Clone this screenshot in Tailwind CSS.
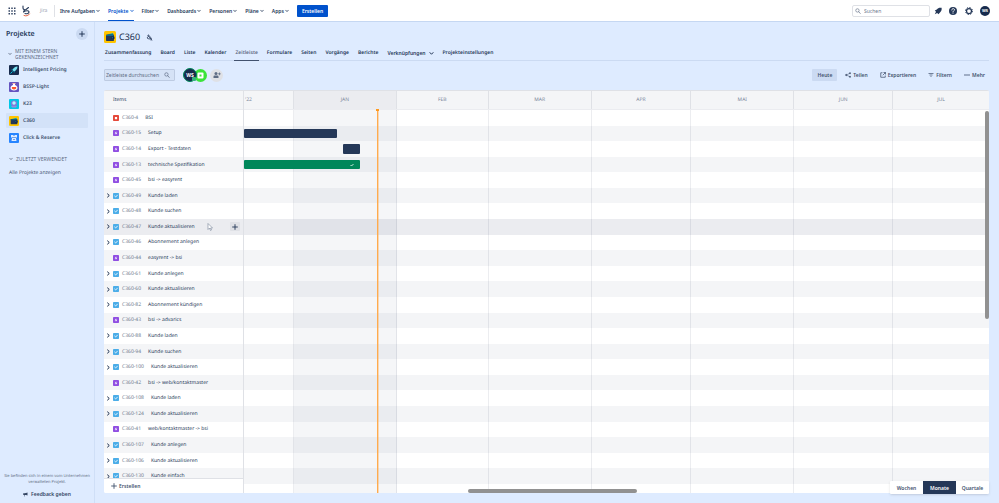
<!DOCTYPE html>
<html lang="de">
<head>
  <meta charset="UTF-8">
  <meta name="viewport" content="width=device-width, initial-scale=1.0">
  <title>C360 - Zeitleiste - Jira</title>
  <script src="https://cdn.jsdelivr.net/npm/@tailwindcss/browser@4"></script>
</head>
<body class="flex h-screen flex-col overflow-hidden bg-[#deebff] font-['Noto_Sans','Open_Sans',sans-serif] text-[5px] leading-[8px] text-[#253858] [text-rendering:geometricPrecision]">

  <!-- Icons -->
  <svg class="hidden">
    <symbol id="chevron" viewBox="0 0 8 8"><path d="M1.500 2.500 4 5.200 6.500 2.500" fill="none" stroke="currentColor" stroke-width="1.600" stroke-linecap="round" stroke-linejoin="round"/></symbol>
    <symbol id="plus" viewBox="0 0 8 8"><path d="M4 .8v6.400M.8 4h6.400" fill="none" stroke="currentColor" stroke-width="1.200" stroke-linecap="round"/></symbol>
    <symbol id="search" viewBox="0 0 16 16"><circle cx="6.500" cy="6.500" r="4.500" fill="none" stroke="currentColor" stroke-width="1.800"/><path d="m10 10 4 4.500" fill="none" stroke="currentColor" stroke-width="2" stroke-linecap="round"/></symbol>
    <symbol id="story" viewBox="0 0 16 16"><rect width="16" height="16" rx="2" fill="#904ee2"/><path d="M8.500 3.500 4.500 9h3v3.500L11.500 7h-3z" fill="#fff"/></symbol>
    <symbol id="bug" viewBox="0 0 16 16"><rect width="16" height="16" rx="2" fill="#e5493a"/><rect x="5" y="5" width="6" height="6" rx="1" fill="#fff"/></symbol>
    <symbol id="task" viewBox="0 0 16 16"><rect width="16" height="16" rx="2" fill="#4bade8"/><path d="m4.500 8.200 2.500 2.500 4.800-5" fill="none" stroke="#fff" stroke-width="2.200" stroke-linecap="round"/></symbol>
    <symbol id="wallet" viewBox="0 0 24 24"><rect width="24" height="24" rx="3" fill="#ffc400"/><path d="m7 7 11-3 1 5H7z" fill="#00a3bf"/><rect x="4" y="7" width="16" height="13" rx="1.500" fill="#253858"/><path d="M4 8h15v2H4z" fill="#0d6c8a"/><rect x="14" y="11" width="7" height="5" rx="1" fill="#172b4d"/><circle cx="16.500" cy="13.500" r="1" fill="#00c7e6"/></symbol>
  </svg>

  <!-- Top navigation -->
  <header class="flex h-[22px] shrink-0 items-center border-b border-[#c5d7f2] bg-white pr-[9px] pl-2 font-semibold">
    <button class="w-2" aria-label="Wechseln zu">
      <svg class="size-2" viewBox="0 0 16 16" fill="#344563"><path d="M1 1h3v3H1zM6.500 1h3v3h-3zM12 1h3v3h-3zM1 6.500h3v3H1zM6.500 6.500h3v3h-3zM12 6.500h3v3h-3zM1 12h3v3H1zM6.500 12h3v3h-3zM12 12h3v3h-3z"/></svg>
    </button>
    <a href="#" class="ml-[5px] flex w-[34px] items-center font-normal text-[#97a0af]">
      <svg class="mr-[9px] h-3 w-2.5 shrink-0" viewBox="0 0 20 24" fill="none" stroke-width="2.200" stroke-linecap="round" stroke-linejoin="round"><path d="M4 2v4c0 3 3 4 6 3l5-4M10 9c-3 1-5 2-5 5 4-3 11-4 11 0 0 3-4 4-8 3" stroke="#253858"/><path d="M6 21c5 2 9 0 11-3" stroke="#de350b" stroke-width="1.500"/></svg>
      Jira
    </a>
    <span class="-ml-[1px] h-3 w-px bg-[#dfe1e6]"></span>
    <nav class="ml-[5px] flex h-full items-center gap-2">
      <button class="flex items-center gap-[1px]">Ihre Aufgaben<svg class="size-1"><use href="#chevron"/></svg></button>
      <button class="flex h-full items-center gap-[1px] border-b-[1px] border-[#0052cc] pt-[1px] text-[#0052cc]">Projekte<svg class="size-1"><use href="#chevron"/></svg></button>
      <button class="flex items-center gap-[1px]">Filter<svg class="size-1"><use href="#chevron"/></svg></button>
      <button class="flex items-center gap-[1px]">Dashboards<svg class="size-1"><use href="#chevron"/></svg></button>
      <button class="flex items-center gap-[1px]">Personen<svg class="size-1"><use href="#chevron"/></svg></button>
      <button class="flex items-center gap-[1px]">Pläne<svg class="size-1"><use href="#chevron"/></svg></button>
      <button class="flex items-center gap-[1px]">Apps<svg class="size-1"><use href="#chevron"/></svg></button>
      <button class="h-3 rounded-[1px] bg-[#0052cc] px-[5px] text-white">Erstellen</button>
    </nav>
    <label class="ml-auto flex h-3 w-[78px] items-center gap-[3px] rounded-[2px] border border-[#dfe1e6] px-[2px] text-[#6b778c]">
      <svg class="size-[6px] shrink-0"><use href="#search"/></svg>
      <input type="search" placeholder="Suchen" aria-label="Suchen" class="w-full min-w-0 font-normal outline-none placeholder:text-[#6b778c]">
    </label>
    <div class="ml-1 flex items-center gap-[6px]">
      <button aria-label="Benachrichtigungen"><svg class="block size-[8px]" viewBox="0 0 20 20" fill="#253858"><path d="M19 2c-5-1-9 0-12 4L2 9l3 3-3 6 6-3 3 3 4-4c3-3 5-7 4-12z"/></svg></button>
      <button aria-label="Hilfe"><svg class="block size-[10px]" viewBox="0 0 20 20"><circle cx="10" cy="10" r="8" fill="#253858"/><path d="M7.500 8c0-4 5.500-3.500 5.500-.5 0 2-3 2-3 4M10 14v.5" fill="none" stroke="#fff" stroke-width="1.800" stroke-linecap="round"/></svg></button>
      <button aria-label="Einstellungen"><svg class="block size-[10px]" viewBox="0 0 20 20" fill="none" stroke="#253858"><circle cx="10" cy="10" r="5" stroke-width="2.500"/><circle cx="10" cy="10" r="7" stroke-width="2" stroke-dasharray="2.750"/></svg></button>
      <button class="size-[10px] rounded-full bg-[#172b4d] text-[4px] font-bold text-white">WS</button>
    </div>
  </header>

  <div class="flex min-h-0 flex-1">
    <!-- Sidebar -->
    <aside class="flex w-[95px] shrink-0 flex-col border-r border-[#cfdff7] px-[6px] pt-[6px] pb-[5px]">
      <div class="flex items-center justify-between">
        <h2 class="pt-[2px] text-[7px] font-semibold text-[#253858]">Projekte</h2>
        <button class="grid size-3 place-items-center rounded-full bg-[#cbdaf2]" aria-label="Projekt erstellen"><svg class="size-[6px] text-[#172b4d]"><use href="#plus"/></svg></button>
      </div>
      <button class="mt-2 flex items-center gap-[3px] pl-[2px] text-left leading-[6px] text-[#5e6c84]">
        <svg class="size-1 shrink-0"><use href="#chevron"/></svg>
        <span>MIT EINEM STERN<br>GEKENNZEICHNET</span>
      </button>
      <ul class="mt-[2px] font-semibold text-[#42526e]">
        <li><a href="#" class="mb-[2px] flex h-[15px] items-center gap-1 rounded-[1px] px-[3px]">
          <svg class="size-[10px]" viewBox="0 0 20 20"><rect width="20" height="20" rx="2" fill="#172b4d"/><path d="M17 3c-5 0-8 3-10 7l3 3c4-2 7-5 7-10z" fill="#79e2f2"/><path d="m8 8-4 2 3 1zM12 12l-2 4-1-3z" fill="#00a3bf"/><path d="m3 17 4-4" stroke="#00c7e6" stroke-width="2"/></svg>
          Intelligent Pricing</a></li>
        <li><a href="#" class="mb-[2px] flex h-[15px] items-center gap-1 rounded-[1px] px-[3px]">
          <svg class="size-[10px]" viewBox="0 0 20 20"><rect width="20" height="20" rx="2" fill="#6554c0"/><path d="M8 3h4v3c3 1 5 3 5 6 0 3-3 5-7 5s-7-2-7-5c0-3 2-5 5-6z" fill="#fff"/><path d="M6 10h8c2 3-1 5-4 5s-6-2-4-5z" fill="#ff5630"/><path d="M7 2h6v2H7z" fill="#ffbdad"/></svg>
          BSSP-Light</a></li>
        <li><a href="#" class="mb-[2px] flex h-[15px] items-center gap-1 rounded-[1px] px-[3px]">
          <svg class="size-[10px]" viewBox="0 0 20 20"><rect width="20" height="20" rx="2" fill="#00c7e6"/><circle cx="10" cy="9" r="6" fill="#8777d9"/><circle cx="10" cy="8" r="3.500" fill="#b3f5ff"/><path d="M4 14h12l-2 3H6z" fill="#998dd9"/></svg>
          K23</a></li>
        <li><a href="#" class="mb-[2px] flex h-[15px] items-center gap-1 rounded-[1px] bg-[#d3e2f8] px-[3px]">
          <svg class="size-[10px]"><use href="#wallet"/></svg>
          C360</a></li>
        <li><a href="#" class="mb-[2px] flex h-[15px] items-center gap-1 rounded-[1px] px-[3px]">
          <svg class="size-[10px]" viewBox="0 0 20 20"><rect width="20" height="20" rx="2" fill="#2684ff"/><path d="M4 4h4l2 2 2-2h4v4l-2 2 1 6H5l1-6-2-2z" fill="#deebff"/><path d="M7 8h2v2H7zM11 8h2v2h-2zM8 13h4v1H8z" fill="#0052cc"/></svg>
          Click &amp; Reserve</a></li>
      </ul>
      <button class="mt-[8px] flex items-center gap-[3px] pl-[3px] text-left text-[#5e6c84]"><svg class="size-1"><use href="#chevron"/></svg>ZULETZT VERWENDET</button>
      <a href="#" class="mt-[6px] pl-[3px] text-[#42526e]">Alle Projekte anzeigen</a>
      <div class="-mx-[4px] mt-auto text-center text-[4px] leading-[6px] text-[#5e6c84]">
        Sie befinden sich in einem vom Unternehmen verwalteten Projekt.
        <button class="mx-auto mt-1 flex items-center gap-[3px] text-[5px] font-semibold leading-[8px] text-[#344563]"><svg class="size-[5px]" viewBox="0 0 10 10" fill="currentColor"><path d="M0 3 6 2l3-1v6L6 6H3v3H2V6L0 5z"/></svg>Feedback geben</button>
      </div>
    </aside>

    <!-- Project -->
    <main class="flex min-w-0 flex-1 flex-col pr-[10px] pb-[10px] pl-[9px]">
      <div class="mt-[9px] flex h-3 items-center gap-[3px]">
        <svg class="size-3"><use href="#wallet"/></svg>
        <h1 class="text-[9px] text-[#172b4d]">C360</h1>
        <button class="ml-[3px]" aria-label="Automatisierung"><svg class="block size-[7px]" viewBox="0 0 14 14" fill="none" stroke="#253858" stroke-width="1.500"><path d="M5 1v2M2 8l4-5 5 6-5 1zM3 2l9 11M9 12l3-1"/></svg></button>
      </div>
      <nav class="mt-[6px] flex h-[12px] gap-[9px] border-b border-[#cbdaf2] px-[1px] font-semibold">
        <a href="#">Zusammenfassung</a>
        <a href="#">Board</a>
        <a href="#">Liste</a>
        <a href="#">Kalender</a>
        <a href="#" class="-mx-[1px] h-[12px] border-b border-[#42526e] px-[1px] text-[#5e6c84]">Zeitleiste</a>
        <a href="#">Formulare</a>
        <a href="#">Seiten</a>
        <a href="#">Vorgänge</a>
        <a href="#">Berichte</a>
        <button class="flex h-2 items-center gap-[3px]">Verknüpfungen<svg class="size-[5px]"><use href="#chevron"/></svg></button>
        <a href="#">Projekteinstellungen</a>
      </nav>

      <div class="mt-2 flex h-3 items-center">
        <label class="flex h-3 w-[71px] items-center rounded-[1px] border border-[#bdcbe2] bg-[#d5e2f6] px-[1px] text-[#5e6c84]">
          <input type="text" placeholder="Zeitleiste durchsuchen" aria-label="Zeitleiste durchsuchen" class="w-full min-w-0 outline-none placeholder:text-[#5e6c84]">
          <svg class="mr-[3px] size-[6px] shrink-0"><use href="#search"/></svg>
        </label>
        <button class="relative z-10 ml-2 grid size-[14px] place-items-center rounded-full border border-[#00875a] bg-[#172b4d] font-bold text-white">WS<span class="absolute right-0 bottom-0 size-1 rounded-[1px] bg-[#36b37e]"></span></button>
        <button class="-ml-[3px] grid size-[13px] place-items-center rounded-full bg-[#3be33b]" aria-label="Bearbeiter"><svg class="size-[7px]" viewBox="0 0 14 14"><rect x="1" y="1" width="12" height="12" rx="2" fill="#fff"/><rect x="5" y="5" width="4" height="4" fill="#3be33b"/></svg></button>
        <button class="ml-[3px] grid size-[13px] place-items-center rounded-full bg-[#dfe1e6]" aria-label="Personen hinzufügen"><svg class="size-2" viewBox="0 0 16 16" fill="#5e6c84"><circle cx="6" cy="5" r="3"/><path d="M1 14V11q0-2 2-2h6q2 0 2 2v3zM12 3h1.500v2h2v1.500h-2v2H12v-2h-2V5h2z"/></svg></button>

        <div class="ml-auto flex items-center gap-3 pr-1 font-semibold text-[#42526e]">
          <button class="-mr-1 h-3 rounded-[1px] bg-[#cbdaf2] px-[5px]">Heute</button>
          <button class="flex items-center gap-[2px]"><svg class="size-[6px]" viewBox="0 0 12 12" fill="currentColor" stroke="currentColor"><path d="M10 2.500 2.500 6l7.500 3.500" fill="none"/><circle cx="2.500" cy="6" r="1.500"/><circle cx="10" cy="2.500" r="1.300"/><circle cx="10" cy="9.500" r="1.300"/></svg>Teilen</button>
          <button class="flex items-center gap-[2px]"><svg class="size-[6px]" viewBox="0 0 12 12" fill="none" stroke="currentColor" stroke-width="1.500"><path d="M5 1.500H1.500v9h9V7M7 1h4v4M11 1 5.500 6.500"/></svg>Exportieren</button>
          <button class="flex items-center gap-[2px]"><svg class="size-[6px]" viewBox="0 0 12 12" fill="none" stroke="currentColor" stroke-width="1.400"><path d="M1 3h10M3 6h6M5 9h2"/></svg>Filtern</button>
          <button class="flex items-center gap-[2px]"><svg class="size-[6px]" viewBox="0 0 12 12" fill="currentColor"><circle cx="2" cy="6" r="1.500"/><circle cx="6" cy="6" r="1.500"/><circle cx="10" cy="6" r="1.500"/></svg>Mehr</button>
        </div>
      </div>

      <!-- Timeline -->
      <section class="relative mt-[9px] flex min-h-0 flex-1 overflow-hidden rounded-[2px] border-t border-[#dfe1e6] bg-white">
        <div class="relative z-10 w-[140px] shrink-0 border-r border-[#dfe1e6]">
          <div class="flex h-[19px] items-center border-b border-[#ebecf0] bg-[#f4f5f7] pl-[9px]">Items</div>
          <ul id="items" class="grid h-[374px] auto-rows-fr"></ul>
          <button class="absolute inset-x-0 bottom-0 flex h-[15px] items-center gap-[2px] border-t border-[#dfe1e6] bg-white pl-[7px] font-semibold text-[#42526e]"><svg class="size-[6px]"><use href="#plus"/></svg>Erstellen</button>
        </div>
        <div class="relative min-w-0 flex-1">
          <div id="months" class="grid h-[19px] grid-cols-[50fr_103fr_92fr_103fr_100fr_103fr_99fr_96fr] border-b border-[#ebecf0] bg-[#f4f5f7] text-[#7a869a]"></div>
          <div id="rows" class="grid h-[374px] auto-rows-fr"></div>
          <div id="columns" class="absolute inset-x-0 top-[19px] bottom-0 grid grid-cols-[50fr_103fr_92fr_103fr_100fr_103fr_99fr_96fr]"></div>
          <div id="today" class="absolute top-[18px] bottom-0 w-[2px] border-l border-[#ffab4d] bg-[#ffab4d]/40"><span class="absolute top-0 -left-[2px] h-[2px] w-[3px] bg-[#ff991f]"></span></div>
        </div>
        <div class="absolute top-[20px] right-0 h-[208px] w-1 rounded-full bg-[#919191]"></div>
        <div id="scroll-x" class="absolute bottom-0 h-1 rounded-full bg-[#919191]"></div>
      </section>
    </main>
  </div>

  <!-- Zoom level -->
  <div class="absolute right-[10px] bottom-[9px] z-20 flex h-[13px] items-stretch rounded-[1px] bg-white font-semibold text-[#42526e] shadow">
    <button class="w-[33px]">Wochen</button>
    <button class="w-[33px] bg-[#253858] text-white">Monate</button>
    <button class="w-[33px]">Quartale</button>
  </div>

  <svg class="pointer-events-none absolute top-[223px] left-[207px] z-30 h-2 w-[6px]" viewBox="0 0 12 16"><path d="M2 1v12l3-3 2 5 2-1-2-4h4z" fill="#fff" stroke="#5e6c84"/></svg>

  <script>
    const items = [
      { key: 'C360-4', name: 'BSI', type: 'bug' },
      { key: 'C360-15', name: 'Setup', type: 'story', bar: [0, 93] },
      { key: 'C360-14', name: 'Export - Testdaten', type: 'story', bar: [99, 116] },
      { key: 'C360-13', name: 'technische Spezifikation', type: 'story', bar: [0, 116], done: true },
      { key: 'C360-45', name: 'bsi -> easyrent', type: 'story' },
      { key: 'C360-49', name: 'Kunde laden', type: 'task' },
      { key: 'C360-48', name: 'Kunde suchen', type: 'task' },
      { key: 'C360-47', name: 'Kunde aktualisieren', type: 'task', hover: true },
      { key: 'C360-46', name: 'Abonnement anlegen', type: 'task' },
      { key: 'C360-44', name: 'easyrent -> bsi', type: 'story' },
      { key: 'C360-61', name: 'Kunde anlegen', type: 'task' },
      { key: 'C360-60', name: 'Kunde aktualisieren', type: 'task' },
      { key: 'C360-82', name: 'Abonnement kündigen', type: 'task' },
      { key: 'C360-43', name: 'bsi -> advarics', type: 'story' },
      { key: 'C360-88', name: 'Kunde laden', type: 'task' },
      { key: 'C360-94', name: 'Kunde suchen', type: 'task' },
      { key: 'C360-100', name: 'Kunde aktualisieren', type: 'task' },
      { key: 'C360-42', name: 'bsi -> web/kontaktmaster', type: 'story' },
      { key: 'C360-108', name: 'Kunde laden', type: 'task' },
      { key: 'C360-124', name: 'Kunde aktualisieren', type: 'task' },
      { key: 'C360-41', name: 'web/kontaktmaster -> bsi', type: 'story' },
      { key: 'C360-107', name: 'Kunde anlegen', type: 'task' },
      { key: 'C360-106', name: 'Kunde aktualisieren', type: 'task' },
      { key: 'C360-130', name: 'Kunde einfach', type: 'task' }
    ];
    const months = ["'22", 'JAN', 'FEB', 'MAR', 'APR', 'MAI', 'JUN', 'JUL'];
    const days = 746; // length of the visible range
    const pct = n => (n / days * 100) + '%';

    const rowColor = (item, i) => item.hover ? 'bg-[#ebecf0]' : i % 2 ? 'bg-[#f4f5f7]' : 'bg-white';

    document.getElementById('items').innerHTML = items.map((item, i) => `
      <li class="flex items-center pl-[2px] ${rowColor(item, i)}">
        <span class="w-[7px]">${item.type === 'task' ? '<svg class="size-[5px] -rotate-90 text-[#172b4d]"><use href="#chevron"/></svg>' : ''}</span>
        <svg class="mr-[3px] size-[6px]"><use href="#${item.type}"/></svg>
        <a href="#" class="mr-[7px] text-[#6b778c]">${item.key}</a>
        <span class="whitespace-nowrap">${item.name.replace('>', '&gt;')}</span>
        ${item.hover ? '<button class="mr-[3px] ml-auto grid h-[9px] w-[10px] place-items-center rounded-[1px] bg-[#dfe1e6]" aria-label="Erstellen"><svg class="size-[6px]"><use href="#plus"/></svg></button>' : ''}
      </li>`).join('');

    document.getElementById('rows').innerHTML = items.map((item, i) => `
      <div class="relative ${rowColor(item, i)}">
        ${item.bar ? `<div class="absolute inset-y-[3px] z-10 flex items-center justify-end rounded-[1px] pr-[6px] ${item.done ? 'bg-[#00875a]' : 'bg-[#253858]'}" style="left:${pct(item.bar[0])};width:${pct(item.bar[1] - item.bar[0])}">
          ${item.done ? '<svg class="size-1" viewBox="0 0 8 8"><path d="m1 4 2 2 4-4" fill="none" stroke="#fff" stroke-width="1.500"/></svg>' : ''}
        </div>` : ''}
      </div>`).join('');

    document.getElementById('months').innerHTML = months.map((m, i) => `
      <div class="flex items-center border-r border-[#dfe1e6] last:border-r-0 ${i === 0 ? 'pl-[1px]' : 'justify-center'} ${i === 1 ? 'bg-[#ebecf0]' : ''}">${m}</div>`).join('');

    document.getElementById('columns').innerHTML = months.map((m, i) => `
      <div class="border-r border-[#091e42]/8 last:border-r-0 ${i === 1 ? 'bg-[#091e42]/4' : ''}"></div>`).join('');

    document.getElementById('today').style.left = pct(133);
    document.getElementById('scroll-x').style.left = '41.1%';
    document.getElementById('scroll-x').style.width = '19.1%';
  </script>
</body>
</html>
